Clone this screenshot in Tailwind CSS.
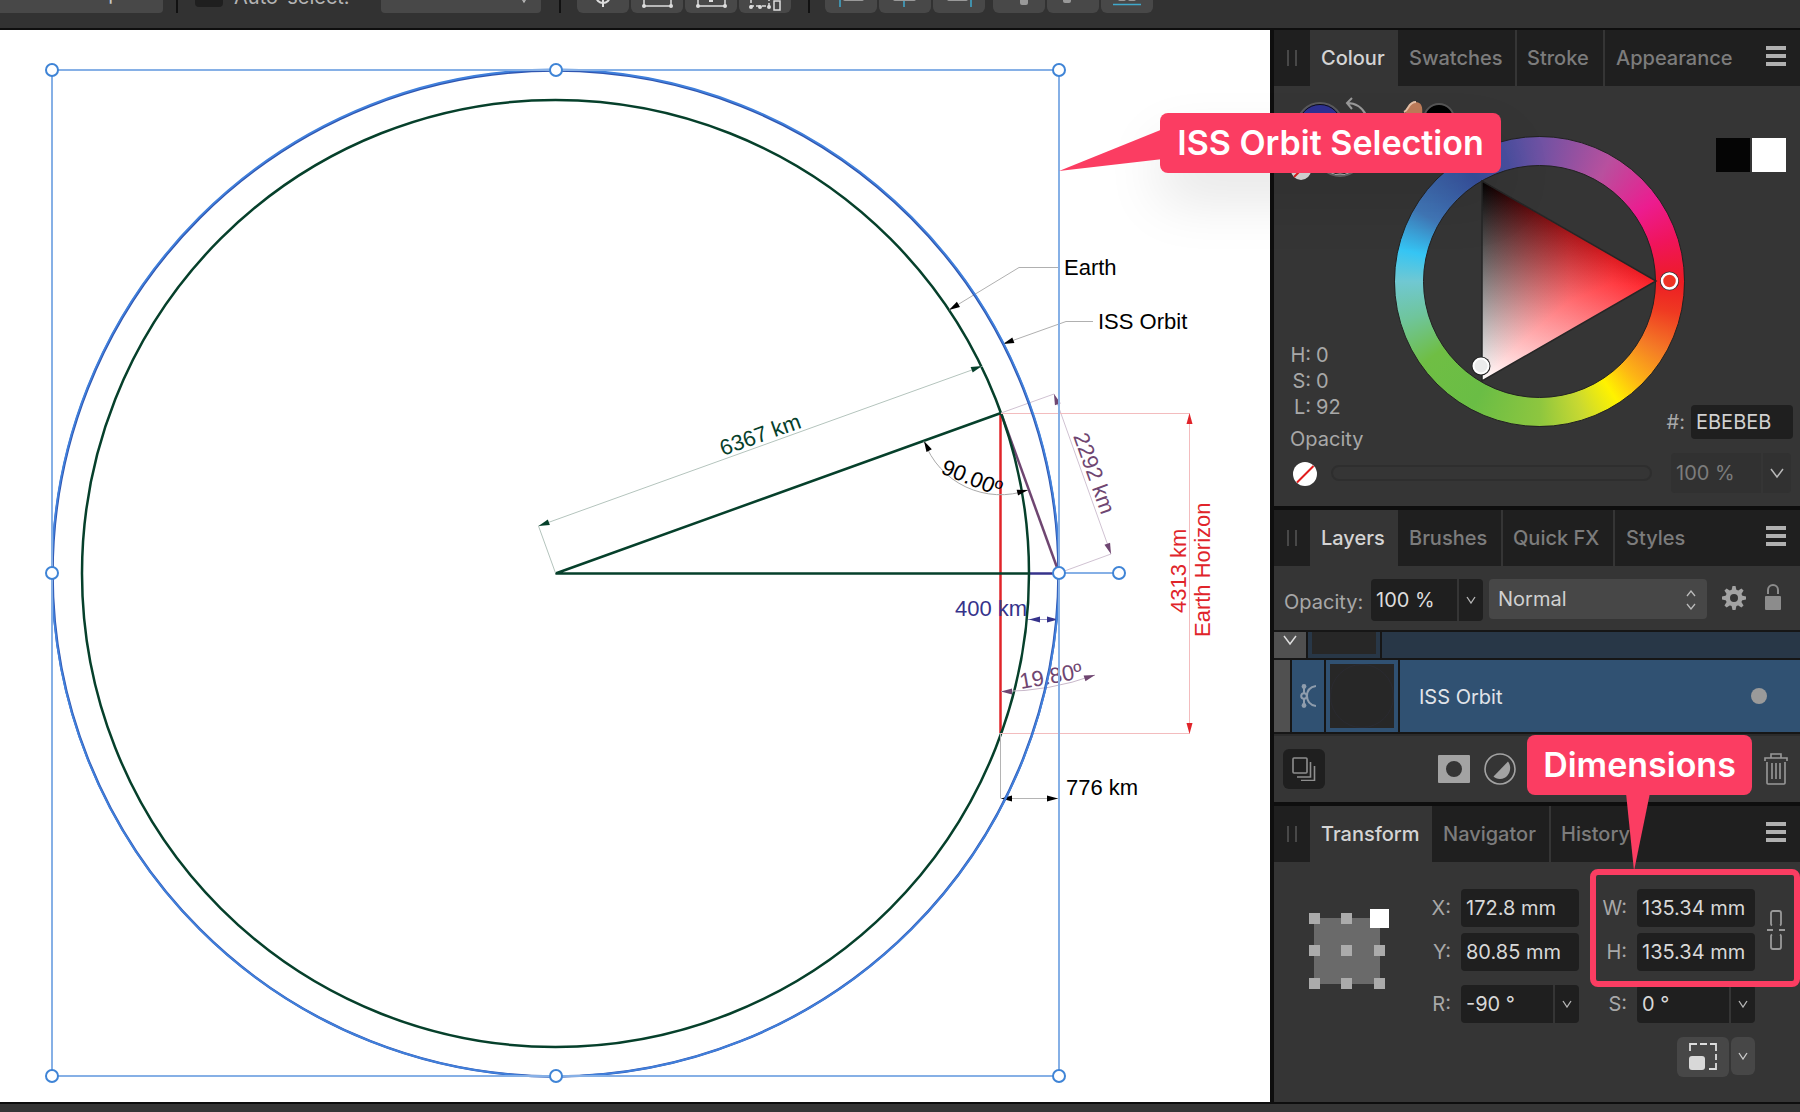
<!DOCTYPE html>
<html lang="en">
<head>
<meta charset="utf-8">
<title>ISS Orbit</title>
<script src="https://cdn.jsdelivr.net/npm/@tailwindcss/browser@4"></script>
</head>
<body class="flex min-h-screen flex-col overflow-x-hidden bg-[#333] font-[Inter,sans-serif] text-[20px] leading-[26px] text-[#a8a8a8]">

<!-- Toolbar, scrolled so only its lower edge shows -->
<header class="flex h-[30px] shrink-0 items-end overflow-hidden border-b-2 border-[#0e0e0e] bg-[#323232] pb-[15px]">
  <button class="flex h-9 w-[163px] shrink-0 items-end justify-end rounded-br bg-[#484848] pb-2 pr-[36px] leading-6 text-[#c8c8c8]">pt</button>
  <span class="ml-[13px] h-9 w-[2px] shrink-0 bg-[#111]"></span>
  <label class="ml-[17px] flex h-9 shrink-0 items-end gap-[11px] text-[#b4b4b4]">
    <input type="checkbox" class="mb-[6px] h-7 w-7 appearance-none rounded bg-[#1f1f1f]">
    <span class="w-[134px] whitespace-nowrap pb-[5px] leading-[22px]">Auto-select:</span>
  </label>
  <div class="ml-[13px] flex h-9 w-[160px] shrink-0 items-end justify-end rounded bg-[#484848] pr-3">
    <svg class="mb-[9px] h-[10px] w-[10px]" viewBox="0 0 10 10" fill="none" stroke="#bbb" stroke-width="1.3"><path d="M2 3l3 5 3-5"/></svg>
  </div>
  <span class="ml-[18px] h-9 w-[2px] shrink-0 bg-[#111]"></span>
  <div class="ml-4 flex shrink-0 gap-[2px]">
    <button aria-label="Pivot" class="flex h-10 w-[52px] items-end justify-center rounded-md bg-[#484848]"><svg class="h-5 w-10" viewBox="0 0 40 20" fill="none" stroke="#ddd" stroke-width="2"><path d="M20 0v14"/><path d="M13 3a7 7 0 0 0 14 0"/></svg></button>
    <button aria-label="Bounds" class="flex h-10 w-[52px] items-end justify-center rounded-md bg-[#484848]"><svg class="h-5 w-10" viewBox="0 0 40 20" fill="none" stroke="#ddd" stroke-width="1.5"><path d="M7 0v13h27V0"/><g fill="#ddd" stroke="none"><circle cx="7" cy="13" r="2"/><circle cx="34" cy="13" r="2"/></g></svg></button>
    <button aria-label="Centre point" class="flex h-10 w-[52px] items-end justify-center rounded-md bg-[#484848]"><svg class="h-5 w-10" viewBox="0 0 40 20" fill="none" stroke="#ddd" stroke-width="1.5"><path d="M7 0v13h27V0"/><g fill="#ddd" stroke="none"><circle cx="7" cy="13" r="2"/><circle cx="34" cy="13" r="2"/><path d="M18 3h4v6h-4z"/></g></svg></button>
    <button aria-label="Transform separately" class="flex h-10 w-[52px] items-end justify-center rounded-md bg-[#484848]"><svg class="h-5 w-10" viewBox="0 0 40 20" fill="none" stroke="#ddd" stroke-width="1.5"><path d="M6 0v13h18V0" stroke-dasharray="4 2"/><path d="M29 8h6v9h-6z"/><g fill="#ddd" stroke="none"><circle cx="6" cy="14" r="2"/><circle cx="15" cy="14" r="2"/><circle cx="24" cy="14" r="2"/></g></svg></button>
  </div>
  <span class="ml-[17px] h-9 w-[2px] shrink-0 bg-[#111]"></span>
  <div class="ml-[15px] flex shrink-0 gap-[2px]">
    <button aria-label="Align left" class="flex h-10 w-[52px] items-end justify-center rounded-md bg-[#484848]"><svg class="h-5 w-10" viewBox="0 0 40 20"><path d="M9 0v14" stroke="#3fa9cc" stroke-width="1.5"/><rect x="12" y="0" width="21" height="8" rx="2" fill="#999"/></svg></button>
    <button aria-label="Align centre" class="flex h-10 w-[52px] items-end justify-center rounded-md bg-[#484848]"><svg class="h-5 w-10" viewBox="0 0 40 20"><path d="M19 0v14" stroke="#3fa9cc" stroke-width="1.5"/><rect x="8" y="0" width="23" height="8" rx="2" fill="#999"/></svg></button>
    <button aria-label="Align right" class="flex h-10 w-[52px] items-end justify-center rounded-md bg-[#484848]"><svg class="h-5 w-10" viewBox="0 0 40 20"><path d="M32 0v14" stroke="#3fa9cc" stroke-width="1.5"/><rect x="8" y="0" width="21" height="8" rx="2" fill="#999"/></svg></button>
  </div>
  <div class="ml-2 flex shrink-0 gap-[2px]">
    <button aria-label="Align top" class="flex h-10 w-[52px] items-end justify-center rounded-md bg-[#484848]"><svg class="h-5 w-10" viewBox="0 0 40 20"><rect x="21" y="0" width="8" height="12" rx="2" fill="#999"/></svg></button>
    <button aria-label="Align middle" class="flex h-10 w-[52px] items-end justify-center rounded-md bg-[#484848]"><svg class="h-5 w-10" viewBox="0 0 40 20"><rect x="10" y="0" width="8" height="10" rx="2" fill="#999"/></svg></button>
    <button aria-label="Align bottom" class="flex h-10 w-[52px] items-end justify-center rounded-md bg-[#484848]"><svg class="h-5 w-10" viewBox="0 0 40 20"><path d="M6 11.500h28" stroke="#3fa9cc" stroke-width="1.500"/><rect x="11" y="0" width="8" height="8" rx="2" fill="#999"/><rect x="21" y="0" width="8" height="8" rx="2" fill="#999"/></svg></button>
  </div>
</header>

<div class="flex flex-1 border-b-2 border-[#0e0e0e]">

<!-- Drawing canvas -->
<main class="min-w-0 flex-1 bg-white">
<svg class="block w-full font-['Liberation_Sans',sans-serif]" viewBox="0 30 1270 1072" font-size="22" fill="none">
  <defs><path id="arrow" d="M0 0L-11 3V-3z"/></defs>

  <path d="M1000.500 413V733" stroke="#e0242a" stroke-width="2.500"/>
  <path d="M1001 413L1059 573" stroke="#6f4671" stroke-width="2.500"/>
  <path d="M1028 573.500H1059" stroke="#36338b" stroke-width="2.500"/>
  <circle cx="555.500" cy="573.500" r="473.500" stroke="#06402b" stroke-width="2.500"/>
  <path d="M1028 573.500H555.500L1001 413" stroke="#06402b" stroke-width="2.500"/>

  <!-- Extension and leader lines -->
  <path d="M555.500 573L538.500 526L983 366" stroke="#b4c4bd"/>
  <path d="M1059 267.500H1019L949 310M1093 321.500H1066L1003 344" stroke="#b0b0b0"/>
  <path d="M1001 413L1054 394L1111 554L1059 573" stroke="#d0c2d2"/>
  <path d="M1001 413.500H1189.500V733.500H1001" stroke="#f3bcbe"/>
  <path d="M1000.500 733V798.500M1001 798.500H1059" stroke="#b4b4b4"/>
  <path d="M1028 619.500H1057" stroke="#9a99c8"/>
  <path d="M924 441A81.500 81.500 0 0 0 1028 490" stroke="#aaa"/>
  <path d="M1001 691.500A278 278 0 0 0 1095 675" stroke="#c8b8ca"/>

  <g fill="#06402b"><use href="#arrow" transform="translate(538.500 526) rotate(160)"/><use href="#arrow" transform="translate(982 366) rotate(-20)"/></g>
  <g fill="#000">
    <use href="#arrow" transform="translate(949 310) rotate(149)"/><use href="#arrow" transform="translate(1003 344) rotate(160)"/>
    <use href="#arrow" transform="translate(924 441) rotate(-118)"/><use href="#arrow" transform="translate(1028 490) rotate(-14)"/>
    <use href="#arrow" transform="translate(1001 798.500) rotate(180)"/><use href="#arrow" transform="translate(1058 798.500)"/>
  </g>
  <g fill="#36338b"><use href="#arrow" transform="translate(1029 619.500) rotate(180)"/><use href="#arrow" transform="translate(1058 619.500)"/></g>
  <g fill="#6f4671">
    <use href="#arrow" transform="translate(1054 394) rotate(-110)"/><use href="#arrow" transform="translate(1111 554) rotate(70)"/>
    <use href="#arrow" transform="translate(1001 691.500) rotate(180)"/><use href="#arrow" transform="translate(1095 675) rotate(-18)"/>
  </g>
  <g fill="#e0242a"><use href="#arrow" transform="translate(1189.500 413) rotate(-90)"/><use href="#arrow" transform="translate(1189.500 734) rotate(90)"/></g>

  <g fill="#000">
    <text x="1064" y="275">Earth</text>
    <text x="1098" y="329">ISS Orbit</text>
    <text x="1066" y="795">776 km</text>
    <text transform="translate(940 473) rotate(22)">90.00º</text>
  </g>
  <text x="955" y="616" fill="#36338b">400 km</text>
  <text transform="translate(723 456) rotate(-19.800)" fill="#06402b">6367 km</text>
  <g fill="#6f4671">
    <text transform="translate(1073 436) rotate(70.200)">2292 km</text>
    <text transform="translate(1021 689) rotate(-10)">19.80º</text>
  </g>
  <g fill="#e0242a">
    <text transform="translate(1186 613) rotate(-90)">4313 km</text>
    <text transform="translate(1210 637) rotate(-90)">Earth Horizon</text>
  </g>

  <!-- Orbit and its selection box -->
  <circle cx="555.500" cy="573.500" r="503" stroke="#2f55b0" stroke-width="2.500"/>
  <circle cx="555.500" cy="573" r="503.500" stroke="#4080dc" stroke-width="1.800"/>
  <path d="M52 70H1059V1076H52zM1059 573H1119" stroke="#86b0e6" stroke-width="2"/>
  <g fill="#fff" stroke="#3f84d6" stroke-width="2">
    <circle cx="52" cy="70" r="6"/><circle cx="556" cy="70" r="6"/><circle cx="1059" cy="70" r="6"/>
    <circle cx="52" cy="573" r="6"/><circle cx="1059" cy="573" r="6"/><circle cx="1119" cy="573" r="6"/>
    <circle cx="52" cy="1076" r="6"/><circle cx="556" cy="1076" r="6"/><circle cx="1059" cy="1076" r="6"/>
  </g>
</svg>
</main>

<aside class="relative flex w-[530px] shrink-0 flex-col border-l-4 border-[#0e0e0e] bg-[#353535]">

  <!-- Colour panel -->
  <section class="border-b-4 border-[#0e0e0e]">
    <nav class="flex h-14 items-stretch bg-[#1f1f1f] font-medium text-[#7c7c7c]">
      <div class="flex w-9 items-center justify-center gap-[6px]"><span class="h-4 w-[2px] bg-[#484848]"></span><span class="h-4 w-[2px] bg-[#484848]"></span></div>
      <button class="w-[88px] bg-[#353535] px-[11px] text-left text-[#d4d4d4]">Colour</button>
      <button class="w-[119px] border-r-2 border-[#353535] px-[11px] text-left">Swatches</button>
      <button class="w-[88px] border-r-2 border-[#353535] px-[10px] text-left">Stroke</button>
      <button class="px-[11px] text-left">Appearance</button>
      <button aria-label="Panel menu" class="ml-auto mr-[14px] flex w-5 flex-col justify-center gap-1 pb-1"><span class="h-1 w-5 bg-[#b0b0b0]"></span><span class="h-1 w-5 bg-[#b0b0b0]"></span><span class="h-1 w-5 bg-[#b0b0b0]"></span></button>
    </nav>
    <div class="flex h-[367px]">
      <div class="flex w-[120px] shrink-0 flex-col pl-4">
        <svg class="mt-[10px] h-[100px] w-[170px] shrink-0" viewBox="1290 96 170 100">
          <circle cx="1320" cy="126" r="23" fill="#2e3192" stroke="#5a5a5a" stroke-width="2"/>
          <circle cx="1320" cy="126" r="21.500" fill="none" stroke="#111"/>
          <path d="M1352 98l-5 5 5 6M1347 103c9 0 15 4 19 12" fill="none" stroke="#999" stroke-width="2"/>
          <path d="M1402 116c6-3 4-13 13-14 7 0 8 5 7 14z" fill="#bd7b59"/><path d="M1404 112c5-2 4-10 12-10" fill="none" stroke="#e5bfa5" stroke-width="2"/>
          <circle cx="1439" cy="119" r="15" fill="#000" stroke="#555" stroke-width="2"/>
          <circle cx="1340" cy="153" r="23" fill="#fff" stroke="#666" stroke-width="2"/><circle cx="1340" cy="153" r="21" fill="none" stroke="#111"/>
          <circle cx="1301" cy="170" r="10" fill="#ddd"/><path d="M1294 177l14-14" stroke="#d22" stroke-width="2"/>
        </svg>
        <dl class="mt-[146px] grid w-[80px] grid-cols-[21px_1fr] gap-x-[5px] whitespace-nowrap">
          <dt class="text-right">H:</dt><dd>0</dd>
          <dt class="text-right">S:</dt><dd>0</dd>
          <dt class="text-right">L:</dt><dd>92</dd>
        </dl>
        <label for="op1" class="mt-[6px]">Opacity</label>
      </div>
      <!-- Hue ring with the shade triangle inside -->
      <div class="mt-[50px] grid h-[291px] w-[291px] shrink-0 place-items-center rounded-full border border-[#222] bg-[conic-gradient(#6e52a3_0deg,#b8509e_30deg,#ec1c8f_55deg,#f0145c_72deg,#ed1c24_90deg,#ef3a22_103deg,#f47b26_120deg,#fdb515_135deg,#fff200_147deg,#c9d931_162deg,#8dc63f_180deg,#6abd45_208deg,#6fbe44_235deg,#6fc59b_254deg,#70c8d2_270deg,#35c5f4_283deg,#4178b8_300deg,#38519f_328deg,#4a4fa0_345deg,#6e52a3_360deg)]">
        <div class="h-[233px] w-[233px] rounded-full border border-[#222] bg-[#353535]">
          <svg class="h-[230px] w-[260px]" viewBox="1424 166 260 230">
            <defs>
              <linearGradient id="red" gradientUnits="userSpaceOnUse" x1="1482" y1="281" x2="1656" y2="281"><stop stop-color="#000"/><stop offset=".25" stop-color="#560b0d"/><stop offset=".5" stop-color="#a51519"/><stop offset=".75" stop-color="#dc1b21"/><stop offset="1" stop-color="#f61d25"/></linearGradient>
              <linearGradient id="white" gradientUnits="userSpaceOnUse" x1="1569" y1="231" x2="1482" y2="381"><stop stop-color="#000"/><stop offset="1" stop-color="#fff"/></linearGradient>
            </defs>
            <g class="isolate"><path d="M1482 181V381L1656 281z" fill="url(#red)"/><path class="mix-blend-plus-lighter" d="M1482 181V381L1656 281z" fill="url(#white)"/></g>
            <path d="M1482 181V381L1656 281z" fill="none" stroke="#262626" stroke-width="1.500"/>
            <circle cx="1481" cy="366" r="9.500" fill="#222"/><circle cx="1481" cy="366" r="7.500" fill="#ebebeb" stroke="#fff" stroke-width="2"/>
            <circle cx="1669.500" cy="281" r="9.500" fill="#333"/><circle cx="1669.500" cy="281" r="7.500" fill="#ee3524" stroke="#fff" stroke-width="2.500"/>
          </svg>
        </div>
      </div>
      <div class="flex min-w-0 flex-1 flex-col items-end pt-[52px]">
        <div class="mr-[14px] flex gap-[2px]"><button aria-label="Black" class="h-[34px] w-[34px] bg-[#050505]"></button><button aria-label="White" class="h-[34px] w-[34px] bg-white"></button></div>
        <label class="mr-[7px] mt-[233px] flex items-center gap-[6px]">#:<input value="EBEBEB" class="h-[34px] w-[102px] rounded bg-[#1f1f1f] px-[5px] text-[#d0d0d0]"></label>
      </div>
    </div>
    <div class="flex h-[53px] pl-[19px]">
      <svg class="mt-[9px] h-6 w-6" viewBox="0 0 24 24"><circle cx="12" cy="12" r="12" fill="#fff"/><path d="M4 20.500L20.500 4" stroke="#e01b1b" stroke-width="2"/></svg>
      <input type="range" id="op1" class="ml-[14px] mt-3 h-4 w-[321px] appearance-none rounded-full border-2 border-[#2e2e2e] [&::-webkit-slider-thumb]:appearance-none">
      <input aria-label="Colour opacity" value="100 %" class="ml-[19px] h-10 w-[90px] rounded-l bg-[#313131] px-[5px] text-[#7c7c7c]">
      <button aria-label="Opacity presets" class="ml-[2px] flex h-10 w-7 items-center justify-center rounded-r bg-[#313131]"><svg class="h-3 w-4" viewBox="0 0 16 12" fill="none" stroke="#b8b8b8" stroke-width="1.500"><path d="M2 2l6 8 6-8"/></svg></button>
    </div>
  </section>

  <!-- Layers panel -->
  <section class="border-b-4 border-[#0e0e0e]">
    <nav class="flex h-14 items-stretch bg-[#1f1f1f] font-medium text-[#7c7c7c]">
      <div class="flex w-9 items-center justify-center gap-[6px]"><span class="h-4 w-[2px] bg-[#484848]"></span><span class="h-4 w-[2px] bg-[#484848]"></span></div>
      <button class="w-[88px] bg-[#353535] px-[11px] text-left text-[#d4d4d4]">Layers</button>
      <button class="w-[105px] border-r-2 border-[#353535] px-[11px] text-left">Brushes</button>
      <button class="w-[112px] whitespace-nowrap border-r-2 border-[#353535] px-[10px] text-left">Quick FX</button>
      <button class="px-[11px] text-left">Styles</button>
      <button aria-label="Panel menu" class="ml-auto mr-[14px] flex w-5 flex-col justify-center gap-1 pb-1"><span class="h-1 w-5 bg-[#b0b0b0]"></span><span class="h-1 w-5 bg-[#b0b0b0]"></span><span class="h-1 w-5 bg-[#b0b0b0]"></span></button>
    </nav>
    <div class="flex h-16 items-start pl-[10px] pt-[13px]">
      <label for="op2" class="w-[87px] pt-[10px]">Opacity:</label>
      <input id="op2" value="100 %" class="h-[42px] w-[86px] rounded-l bg-[#1f1f1f] px-[5px] text-[#dcdcdc]">
      <button aria-label="Opacity presets" class="ml-[2px] flex h-[42px] w-6 items-center justify-center rounded-r bg-[#1f1f1f]"><svg class="h-2 w-[10px]" viewBox="0 0 10 8" fill="none" stroke="#b8b8b8" stroke-width="1.300"><path d="M1 1l4 6 4-6"/></svg></button>
      <div class="relative ml-[6px] w-[218px]">
        <select aria-label="Blend mode" class="h-10 w-full appearance-none rounded bg-[#474747] px-[9px] text-[#d0d0d0]"><option>Normal</option></select>
        <svg class="pointer-events-none absolute right-[11px] top-[11px] h-5 w-[10px]" viewBox="0 0 10 20" fill="none" stroke="#bbb" stroke-width="1.300"><path d="M1 6l4-5 4 5M1 14l4 5 4-5"/></svg>
      </div>
      <button aria-label="Blend options" class="ml-[15px] mt-[7px]"><svg class="h-6 w-6" viewBox="-12 -12 24 24" fill="#a3a3a3"><path fill-rule="evenodd" d="M0-8.500A8.500 8.500 0 1 1 0 8.500 8.500 8.500 0 0 1 0-8.500zM0-4A4 4 0 1 0 0 4 4 4 0 0 0 0-4z"/><g><path id="tooth" d="M-2.500-7.500L-1.500-12h3L2.500-7.500z"/><use href="#tooth" transform="rotate(45)"/><use href="#tooth" transform="rotate(90)"/><use href="#tooth" transform="rotate(135)"/><use href="#tooth" transform="rotate(180)"/><use href="#tooth" transform="rotate(225)"/><use href="#tooth" transform="rotate(270)"/><use href="#tooth" transform="rotate(315)"/></g></svg></button>
      <button aria-label="Lock" class="ml-[18px] mt-[5px]"><svg class="h-[26px] w-[18px]" viewBox="0 0 18 26"><path d="M4 10V6a5 5 0 0 1 10 0v4" fill="none" stroke="#8c8c8c" stroke-width="2"/><rect x="1" y="12" width="16" height="14" rx="1" fill="#8c8c8c"/></svg></button>
    </div>
    <div class="border-y-2 border-[#161616]">
      <div class="flex h-[26px] gap-[2px] bg-[#161616]">
        <button aria-label="Collapse" class="flex w-8 items-start justify-center bg-[#505050] pt-[2px]"><svg class="h-3 w-4" viewBox="0 0 16 12" fill="none" stroke="#ddd" stroke-width="1.500"><path d="M2 2l6 8 6-8"/></svg></button>
        <div class="w-[72px] bg-[#283747] px-1 pb-1"><div class="h-full bg-[#272727]"></div></div>
        <div class="flex-1 bg-[#283747]"></div>
      </div>
      <div class="flex h-[74px] gap-[2px] border-t-2 border-[#161616] bg-[#161616]">
        <div class="w-4 bg-[#505050]"></div>
        <div class="flex w-8 items-center justify-center bg-[#305172]"><svg class="h-6 w-4" viewBox="0 0 16 24" fill="none" stroke="#8f9dad" stroke-width="2"><path d="M4 3v6M4 15v6M16 2C10 3 7 7 7 12s3 9 9 10"/><circle cx="4" cy="12" r="2.800"/><g fill="#8f9dad" stroke="none"><circle cx="4" cy="2.500" r="2.400"/><circle cx="4" cy="21.500" r="2.400"/></g></svg></div>
        <div class="w-[72px] bg-[#305172] p-1"><div class="flex h-full items-center justify-center bg-[#272727]"><span class="h-16 w-16 rounded-full border border-[#2a2a30]"></span></div></div>
        <div class="flex flex-1 items-center justify-between bg-[#305172] pl-[19px] pr-[33px] text-[#e0e4e9]"><span class="pt-[2px]">ISS Orbit</span><span class="h-4 w-4 rounded-full bg-[#9a9a9a]"></span></div>
      </div>
    </div>
    <div class="flex h-[68px] items-center border-t-2 border-[#2b2b2b] pl-[9px] pr-3">
      <button aria-label="Duplicate layers" class="flex h-10 w-[42px] items-center justify-center rounded-md bg-[#1f1f1f]"><svg class="h-6 w-6" viewBox="0 0 24 24" fill="none" stroke="#8e8e8e" stroke-width="1.600"><rect x="1" y="1" width="14" height="15" rx="1"/><path d="M18.500 5v15H5M22.500 9v14.500H9"/></svg></button>
      <button aria-label="Mask layer" class="ml-[113px]"><svg class="h-7 w-8" viewBox="0 0 32 28"><path fill="#a3a3a3" fill-rule="evenodd" d="M1 0h30a1 1 0 0 1 1 1v26a1 1 0 0 1-1 1H1a1 1 0 0 1-1-1V1a1 1 0 0 1 1-1zM16 6a8 8 0 1 0 0 16 8 8 0 0 0 0-16z"/></svg></button>
      <button aria-label="Adjustments" class="ml-[14px]"><svg class="h-8 w-8" viewBox="0 0 32 32"><circle cx="16" cy="16" r="15" fill="none" stroke="#a3a3a3" stroke-width="1.600"/><path d="M24 8.500C29 15 25 26 16 26c-3 0-5-1-6.500-2.500z" fill="#a3a3a3"/></svg></button>
      <button aria-label="Delete layer" class="ml-auto"><svg class="h-8 w-6" viewBox="0 0 24 32" fill="none" stroke="#999" stroke-width="1.600"><path d="M1 8V5h22v3M7 5V1h10v4M3 9v21a1 1 0 0 0 1 1h16a1 1 0 0 0 1-1V9M8 10v16M12 10v16M16 10v16"/></svg></button>
    </div>
  </section>

  <!-- Transform panel -->
  <section>
    <nav class="flex h-14 items-stretch bg-[#1f1f1f] font-medium text-[#7c7c7c]">
      <div class="flex w-9 items-center justify-center gap-[6px]"><span class="h-4 w-[2px] bg-[#484848]"></span><span class="h-4 w-[2px] bg-[#484848]"></span></div>
      <button class="w-[122px] bg-[#353535] px-[11px] text-left text-[#d4d4d4]">Transform</button>
      <button class="w-[119px] border-r-2 border-[#353535] px-[11px] text-left">Navigator</button>
      <button class="px-[10px] text-left">History</button>
      <button aria-label="Panel menu" class="ml-auto mr-[14px] flex w-5 flex-col justify-center gap-1 pb-1"><span class="h-1 w-5 bg-[#b0b0b0]"></span><span class="h-1 w-5 bg-[#b0b0b0]"></span><span class="h-1 w-5 bg-[#b0b0b0]"></span></button>
    </nav>
    <div class="flex items-start pl-[34px]">
      <svg class="mt-[46px] h-[84px] w-[84px] shrink-0" viewBox="0 0 84 84" fill="#ababab"><path d="M6 10h66v66H6z" fill="#6a6a6a"/><path d="M1 5h11v11H1zM33 5h11v11H33zM1 37h11v11H1zM33 37h11v11H33zM66 37h11v11H66zM1 70h11v11H1zM33 70h11v11H33zM66 70h11v11H66z"/><path d="M62 1h19v19H62z" fill="#fff"/></svg>
      <div class="ml-[33px] pt-[27px]">
        <div class="grid grid-cols-[26px_118px_38px_118px] items-center gap-x-[10px] gap-y-[6px] text-[#d8d8d8]">
          <label for="x" class="text-right text-[#a8a8a8]">X:</label><input id="x" value="172.8 mm" class="h-[38px] w-full rounded bg-[#1f1f1f] px-[5px]">
          <label for="w" class="text-right text-[#a8a8a8]">W:</label><input id="w" value="135.34 mm" class="h-[38px] w-full rounded bg-[#1f1f1f] px-[5px]">
          <label for="y" class="text-right text-[#a8a8a8]">Y:</label><input id="y" value="80.85 mm" class="h-[38px] w-full rounded bg-[#1f1f1f] px-[5px]">
          <label for="h" class="text-right text-[#a8a8a8]">H:</label><input id="h" value="135.34 mm" class="h-[38px] w-full rounded bg-[#1f1f1f] px-[5px]">
        </div>
        <div class="mt-[14px] grid grid-cols-[26px_118px_38px_118px] items-center gap-x-[10px] text-[#d8d8d8]">
          <label for="r" class="text-right text-[#a8a8a8]">R:</label>
          <div class="flex gap-[2px]"><input id="r" value="-90 °" class="h-[38px] w-[92px] rounded-l bg-[#1f1f1f] px-[5px]"><button aria-label="Rotation presets" class="flex h-[38px] w-6 items-center justify-center rounded-r bg-[#1f1f1f]"><svg class="h-2 w-[10px]" viewBox="0 0 10 8" fill="none" stroke="#b8b8b8" stroke-width="1.300"><path d="M1 1l4 6 4-6"/></svg></button></div>
          <label for="s" class="text-right text-[#a8a8a8]">S:</label>
          <div class="flex gap-[2px]"><input id="s" value="0 °" class="h-[38px] w-[92px] rounded-l bg-[#1f1f1f] px-[5px]"><button aria-label="Shear presets" class="flex h-[38px] w-6 items-center justify-center rounded-r bg-[#1f1f1f]"><svg class="h-2 w-[10px]" viewBox="0 0 10 8" fill="none" stroke="#b8b8b8" stroke-width="1.300"><path d="M1 1l4 6 4-6"/></svg></button></div>
        </div>
        <div class="mt-[14px] flex justify-end gap-[2px]">
          <button aria-label="Scale with object" class="flex h-10 w-[52px] items-center justify-center rounded-md bg-[#474747]"><svg class="h-[28px] w-[28px]" viewBox="0 0 28 28"><path d="M1 8V1h7M11 1h7M21 1h6v7M27 11v6M27 20v6h-7" fill="none" stroke="#ddd" stroke-width="1.800"/><rect x="0" y="13" width="16" height="14" rx="3" fill="#d8d8d8"/></svg></button>
          <button aria-label="Scale options" class="flex h-[38px] w-6 items-center justify-center rounded-md bg-[#474747]"><svg class="h-2 w-[10px]" viewBox="0 0 10 8" fill="none" stroke="#ccc" stroke-width="1.300"><path d="M1 1l4 6 4-6"/></svg></button>
        </div>
      </div>
      <button aria-label="Link dimensions" class="ml-3 mt-12"><svg class="h-10 w-[18px]" viewBox="0 0 18 40" fill="none" stroke="#999" stroke-width="1.800"><path d="M5 15.500a2 2 0 0 1-1-2V3a2 2 0 0 1 2-2h6a2 2 0 0 1 2 2v10.500a2 2 0 0 1-1 2M5 24.500a2 2 0 0 0-1 2V37a2 2 0 0 0 2 2h6a2 2 0 0 0 2-2V26.500a2 2 0 0 0-1-2M0 20h6M12 20h6"/></svg></button>
    </div>
  </section>

  <!-- Annotations laid over the panels -->
  <div class="absolute left-[-114px] top-[83px] h-[60px] w-[341px] rounded-lg shadow-[0_28px_56px_rgba(0,0,0,0.1)]"></div>
  <svg class="absolute left-[-215px] top-[98px] h-[46px] w-[104px]" viewBox="0 0 104 46" fill="#fb3d62"><path d="M0 43L104 1V31z"/></svg>
  <div class="absolute left-[-114px] top-[83px] flex h-[60px] w-[341px] items-center justify-center whitespace-nowrap rounded-lg bg-[#fb3d62] text-[34px] font-semibold text-white">ISS Orbit Selection</div>
  <svg class="absolute left-[352px] top-[763px] h-[78px] w-6" viewBox="0 0 24 78" fill="#fb3d62"><path d="M0 0H24L8 78z"/></svg>
  <div class="absolute left-[253px] top-[705px] flex h-[60px] w-[225px] items-center justify-center rounded-lg bg-[#fb3d62] text-[34px] font-semibold text-white">Dimensions</div>
  <div class="pointer-events-none absolute right-0 top-[839px] h-[118px] w-[210px] rounded-lg border-[6px] border-[#fb3d62]"></div>
</aside>
</div>
<footer class="h-2 shrink-0 bg-[#353535]"></footer>
</body>
</html>
